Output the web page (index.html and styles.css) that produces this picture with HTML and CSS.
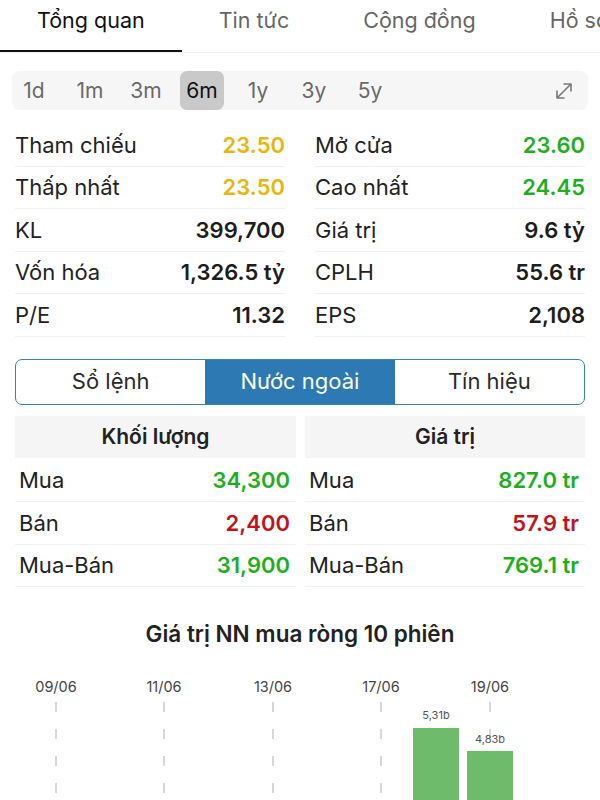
FILE: index.html
```html
<!DOCTYPE html>
<html lang="vi">
<head>
    <meta charset="UTF-8">
    <meta name="viewport" content="width=device-width, initial-scale=1.0">
    <title>Tổng quan</title>
    <link rel="stylesheet" href="styles.css">
</head>
<body>
<!-- thanh tab trên cùng -->
<div class="tabs">
    <div class="tab active">Tổng quan</div>
    <div class="tab">Tin tức</div>
    <div class="tab">Cộng đồng</div>
    <div class="tab">Hồ sơ</div>
</div>

<!-- khoảng thời gian -->
<div class="range">
    <span class="range-item">1d</span>
    <span class="range-item">1m</span>
    <span class="range-item">3m</span>
    <span class="range-item selected">6m</span>
    <span class="range-item">1y</span>
    <span class="range-item">3y</span>
    <span class="range-item">5y</span>
    <svg class="expand" width="20" height="20" viewBox="0 0 20 20">
        <path d="M3 17 L17 3 M10 3 H17 V10 M3 10 V17 H10" fill="none" stroke="#7a7a7a" stroke-width="1.6" stroke-linecap="round" stroke-linejoin="round"/>
    </svg>
</div>

<!-- chỉ số -->
<div class="stats">
    <div class="stat-col">
        <div class="stat-row"><span>Tham chiếu</span><b class="yellow">23.50</b></div>
        <div class="stat-row"><span>Thấp nhất</span><b class="yellow">23.50</b></div>
        <div class="stat-row"><span>KL</span><b>399,700</b></div>
        <div class="stat-row"><span>Vốn hóa</span><b>1,326.5 tỷ</b></div>
        <div class="stat-row"><span>P/E</span><b>11.32</b></div>
    </div>
    <div class="stat-col">
        <div class="stat-row"><span>Mở cửa</span><b class="green">23.60</b></div>
        <div class="stat-row"><span>Cao nhất</span><b class="green">24.45</b></div>
        <div class="stat-row"><span>Giá trị</span><b>9.6 tỷ</b></div>
        <div class="stat-row"><span>CPLH</span><b>55.6 tr</b></div>
        <div class="stat-row"><span>EPS</span><b>2,108</b></div>
    </div>
</div>

<!-- segmented control -->
<div class="segment">
    <div class="seg">Sổ lệnh</div>
    <div class="seg active">Nước ngoài</div>
    <div class="seg">Tín hiệu</div>
</div>

<!-- giao dịch nước ngoài -->
<div class="foreign">
    <div class="f-table">
        <div class="f-head">Khối lượng</div>
        <div class="f-row"><span>Mua</span><b class="green">34,300</b></div>
        <div class="f-row"><span>Bán</span><b class="red">2,400</b></div>
        <div class="f-row"><span>Mua-Bán</span><b class="green">31,900</b></div>
    </div>
    <div class="f-table">
        <div class="f-head">Giá trị</div>
        <div class="f-row"><span>Mua</span><b class="green">827.0 tr</b></div>
        <div class="f-row"><span>Bán</span><b class="red">57.9 tr</b></div>
        <div class="f-row"><span>Mua-Bán</span><b class="green">769.1 tr</b></div>
    </div>
</div>

<h2 class="chart-title">Giá trị NN mua ròng 10 phiên</h2>

<svg class="chart" width="600" height="140" viewBox="0 660 600 140">
    <g class="dates" text-anchor="middle">
        <text x="56" y="690">09/06</text>
        <text x="164" y="690">11/06</text>
        <text x="273" y="690">13/06</text>
        <text x="381" y="690">17/06</text>
        <text x="490" y="690">19/06</text>
    </g>
    <rect x="413" y="726" width="46" height="80" fill="#6dbb6b"/>
    <rect x="467" y="749" width="46" height="60" fill="#6dbb6b"/>
    <g stroke="#b0b0b0" stroke-width="1" stroke-dasharray="10 17">
        <line x1="56" y1="700" x2="56" y2="800"/>
        <line x1="164" y1="700" x2="164" y2="800"/>
        <line x1="273" y1="700" x2="273" y2="800"/>
        <line x1="381" y1="700" x2="381" y2="800"/>
        <line x1="490" y1="700" x2="490" y2="745"/>
    </g>
    <g class="bar-labels" text-anchor="middle">
        <text x="436" y="717">5,31b</text>
        <text x="490" y="741">4,83b</text>
    </g>
</svg>
</body>
</html>
```

FILE: styles.css
```css
/* reset */
* {
    margin: 0;
    padding: 0;
    box-sizing: border-box;
}

body {
    font-family: Inter, "Noto Sans", sans-serif;
    background-color: #ffffff;
    color: #222;
    width: 600px;
    height: 800px;
    overflow: hidden;
}

/* tab trên cùng */
.tabs {
    display: flex;
    height: 53px;
    border-bottom: 1px solid #f0f0f0;
    white-space: nowrap;
    overflow: hidden;
}

.tab {
    padding: 0 37px;
    font-size: 21.5px;
    line-height: 40px;
    color: #666;
    flex-shrink: 0;
}

.tab.active {
    color: #111;
    border-bottom: 2px solid #111;
}

/* khoảng thời gian */
.range {
    display: flex;
    align-items: center;
    gap: 12px;
    margin: 18px 12px 0;
    height: 39px;
    background-color: #f6f6f6;
    border-radius: 8px;
}

.range-item {
    width: 44px;
    height: 39px;
    line-height: 39px;
    text-align: center;
    font-size: 21px;
    color: #6a6a6a;
    border-radius: 7px;
}

.range-item.selected {
    background-color: #c9c9c9;
    color: #111;
}

.expand {
    margin-left: auto;
    margin-right: 14px;
}

/* chỉ số */
.stats {
    display: grid;
    grid-template-columns: 1fr 1fr;
    column-gap: 30px;
    margin: 14px 15px 0;
}

.stat-row {
    display: flex;
    justify-content: space-between;
    align-items: center;
    height: 42.5px;
    border-bottom: 1px solid #efefef;
    font-size: 22px;
}

.stat-row b,
.f-row b {
    font-weight: 600;
    color: #1d1d1d;
}

.yellow { color: #e8b60c !important; }
.green { color: #1eae1e !important; }
.red { color: #c4121c !important; }

/* segmented control */
.segment {
    display: flex;
    margin: 22px 15px 0;
    height: 46px;
    border: 1.5px solid #3a80b7;
    border-radius: 7px;
    overflow: hidden;
}

.seg {
    flex: 1;
    text-align: center;
    line-height: 43px;
    font-size: 22px;
    color: #2a2a2a;
}

.seg.active {
    background-color: #2c79b4;
    color: #ffffff;
}

/* giao dịch nước ngoài */
.foreign {
    display: grid;
    grid-template-columns: 281px 280px;
    column-gap: 9px;
    margin: 11px 15px 0;
}

.f-head {
    height: 42px;
    line-height: 42px;
    text-align: center;
    background-color: #f5f5f5;
    font-size: 21px;
    font-weight: 600;
    margin-bottom: 2px;
}

.f-row {
    display: flex;
    justify-content: space-between;
    align-items: center;
    height: 42.5px;
    padding: 0 6px 0 4px;
    border-bottom: 1px solid #f1f1f1;
    font-size: 22px;
}

/* biểu đồ */
.chart-title {
    margin-top: 33px;
    text-align: center;
    font-size: 22.5px;
    font-weight: 600;
    line-height: 28px;
    color: #222;
}

.chart {
    display: block;
    margin-top: 14px;
}

.dates text {
    font-size: 14.5px;
    fill: #444;
}

.bar-labels text {
    font-size: 11px;
    fill: #555;
}
```
